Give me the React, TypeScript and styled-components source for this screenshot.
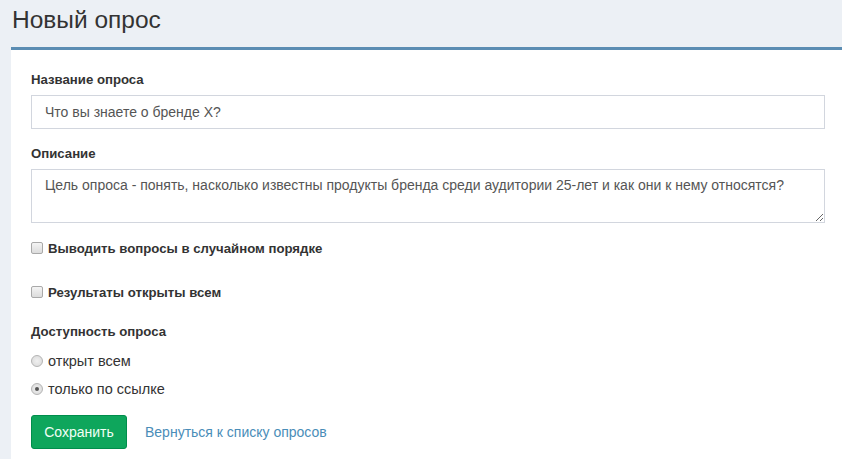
import React from "react";
import styled, { createGlobalStyle } from "styled-components";

const GlobalStyle = createGlobalStyle`
  html, body {
    margin: 0;
    padding: 0;
    background: #ecf0f5;
    font-family: "Liberation Sans", Arial, sans-serif;
    color: #333;
    overflow: hidden;
  }
`;

const Page = styled.div`
  width: 842px;
  height: 459px;
  padding-left: 11px;
  box-sizing: border-box;
  overflow: hidden;
`;

const Title = styled.h1`
  margin: 0;
  padding: 5px 0 0 1px;
  height: 47px;
  box-sizing: border-box;
  font-size: 24.5px;
  font-weight: normal;
  line-height: 30px;
  color: #333;
`;

const Panel = styled.div`
  background: #fff;
  border-top: 3px solid #5b8db3;
  margin-right: -3px;
  padding: 20px 20px 20px 20px;
  min-height: 420px;
`;

const Group = styled.div<{ $gap?: number }>`
  margin-bottom: ${(p) => (p.$gap ?? 15)}px;
`;

const Label = styled.label<{ $gap?: number }>`
  display: block;
  font-size: 13.2px;
  font-weight: bold;
  line-height: 20px;
  margin-bottom: ${(p) => (p.$gap ?? 5)}px;
`;

const TextInput = styled.input`
  display: block;
  width: 100%;
  height: 34px;
  box-sizing: border-box;
  border: 1px solid #d2d6de;
  padding: 6px 13px;
  font-family: inherit;
  font-size: 14px;
  color: #555;
  outline: none;
`;

const TextArea = styled.textarea`
  display: block;
  width: 100%;
  height: 54px;
  box-sizing: border-box;
  border: 1px solid #d2d6de;
  padding: 5px 13px;
  font-family: inherit;
  font-size: 14px;
  line-height: 20px;
  color: #555;
  resize: vertical;
  outline: none;
`;

const CheckRow = styled.label<{ $bold?: boolean }>`
  display: flex;
  align-items: center;
  height: 20px;
  font-size: ${(p) => (p.$bold ? 13.2 : 14.5)}px;
  font-weight: ${(p) => (p.$bold ? "bold" : "normal")};
  color: #333;

  & + & {
    margin-top: 8px;
  }
`;

const Box = styled.input`
  appearance: none;
  margin: 0 5px 0 0;
  width: 12px;
  height: 12px;
  border: 1px solid #a9a9a9;
  border-radius: 2px;
  background: linear-gradient(#f4f4f4, #dcdcdc);
  box-sizing: border-box;
`;

const Radio = styled.input`
  appearance: none;
  margin: 0 5px 0 0;
  width: 12px;
  height: 12px;
  border: 1px solid #b4b4b4;
  border-radius: 50%;
  background: radial-gradient(circle, #f0f0f0 0, #d8d8d8 100%);
  box-sizing: border-box;
  display: grid;
  place-items: center;

  &:checked::after {
    content: "";
    width: 4px;
    height: 4px;
    border-radius: 50%;
    background: #555;
  }
`;

const Actions = styled.div`
  display: flex;
  align-items: center;
  gap: 18px;
`;

const SaveButton = styled.button`
  height: 34px;
  width: 96px;
  background: #0ea65c;
  border: 1px solid #008d4c;
  border-radius: 3px;
  color: #f2fff6;
  font-family: inherit;
  font-size: 14px;
`;

const BackLink = styled.a`
  color: #4a8db8;
  font-size: 14px;
  text-decoration: none;
`;

export default function App() {
  return (
    <Page>
      <GlobalStyle />
      <Title>Новый опрос</Title>
      <Panel>
        <Group>
          <Label>Название опроса</Label>
          <TextInput defaultValue="Что вы знаете о бренде Х?" />
        </Group>
        <Group>
          <Label>Описание</Label>
          <TextArea defaultValue="Цель опроса - понять, насколько известны продукты бренда среди аудитории 25-лет и как они к нему относятся?" />
        </Group>
        <Group $gap={24}>
          <CheckRow $bold>
            <Box type="checkbox" />
            Выводить вопросы в случайном порядке
          </CheckRow>
        </Group>
        <Group $gap={20}>
          <CheckRow $bold>
            <Box type="checkbox" />
            Результаты открыты всем
          </CheckRow>
        </Group>
        <Group $gap={16}>
          <Label $gap={9}>Доступность опроса</Label>
          <CheckRow>
            <Radio type="radio" name="access" />
            открыт всем
          </CheckRow>
          <CheckRow>
            <Radio type="radio" name="access" defaultChecked />
            только по ссылке
          </CheckRow>
        </Group>
        <Actions>
          <SaveButton>Сохранить</SaveButton>
          <BackLink href="#">Вернуться к списку опросов</BackLink>
        </Actions>
      </Panel>
    </Page>
  );
}
